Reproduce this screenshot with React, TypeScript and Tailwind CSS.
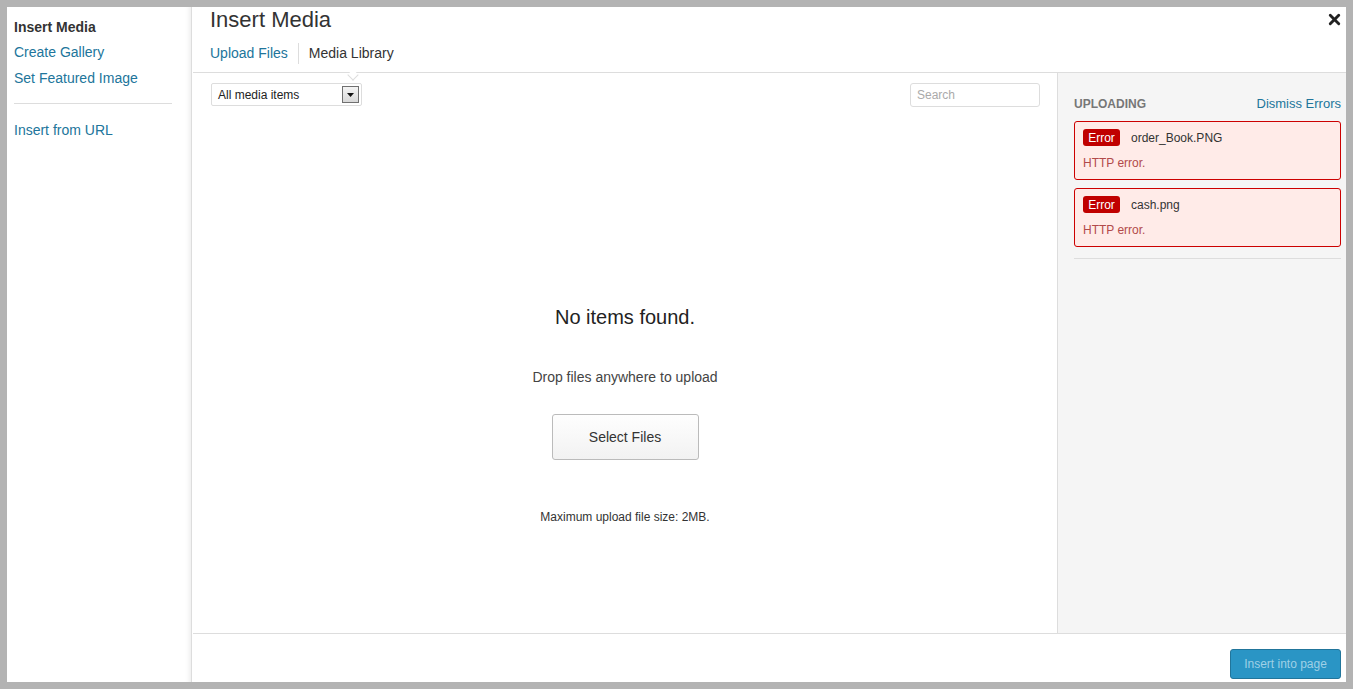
import { X } from "lucide-react";

const font = { fontFamily: '"Liberation Sans", Arial, sans-serif' };

function MenuLink({ children, className = "" }: { children: React.ReactNode; className?: string }) {
  return <a className={`block text-[14px] leading-[18px] text-[#21759b] ${className}`}>{children}</a>;
}

function ErrorCard({ name }: { name: string }) {
  return (
    <div className="h-[59px] w-[267px] rounded-[3px] border border-[#cc0000] bg-[#ffebe8] pl-[8px] pt-[7px]">
      <div className="flex items-center">
        <span className="flex h-[17px] w-[37px] items-center justify-center rounded-[3px] bg-[#c00000] text-[12px] text-white">
          Error
        </span>
        <span className="ml-[11px] text-[12px] text-[#333]">{name}</span>
      </div>
      <div className="mt-[9px] text-[12px] leading-[14px] text-[#b24a4a]">HTTP error.</div>
    </div>
  );
}

export default function App() {
  return (
    <div style={font} className="h-[689px] w-full bg-[#b3b3b3] p-[7px]">
      <div className="flex h-full bg-white">
        {/* left menu */}
        <div className="w-[185px] shrink-0 border-r border-[#dddddd] pl-[7px] pt-[11px] shadow-[inset_-6px_0_6px_-6px_rgba(0,0,0,0.12)]">
          <div className="text-[14px] font-bold leading-[18px] text-[#333]">Insert Media</div>
          <MenuLink className="mt-[7px]">Create Gallery</MenuLink>
          <MenuLink className="mt-[8px]">Set Featured Image</MenuLink>
          <div className="mt-[16px] mr-[19px] h-px bg-[#dddddd]" />
          <MenuLink className="mt-[17px]">Insert from URL</MenuLink>
        </div>

        {/* main frame */}
        <div className="ml-px flex min-w-0 flex-1 flex-col">
          <div className="relative h-[66px] shrink-0 border-b border-[#dddddd] pl-[17px]">
            <div className="pt-[1px] text-[22px] leading-[24px] text-[#333]">Insert Media</div>
            <button className="absolute right-[3px] top-[4px] text-[#222]">
              <X className="h-[17px] w-[17px]" strokeWidth={4} />
            </button>
            <div className="mt-[11px] flex items-center text-[14px]">
              <span className="pr-[10px] text-[#21759b]">Upload Files</span>
              <span className="h-[21px] w-px bg-[#dddddd]" />
              <span className="pl-[10px] text-[#333]">Media Library</span>
            </div>
            <div className="absolute left-[156px] top-[64px] h-[8px] w-[8px] rotate-45 border-b border-r border-[#dddddd] bg-white" />
          </div>

          <div className="flex min-h-0 flex-1">
            {/* browser */}
            <div className="flex w-[864px] shrink-0 flex-col">
              <div className="flex items-start justify-between pl-[18px] pr-[17px] pt-[10px]">
                <div className="flex h-[23px] w-[151px] items-center justify-between rounded-[2px] border border-[#dddddd] pl-[6px] pr-[2px] text-[12px] text-[#222]">
                  <span>All media items</span>
                  <span className="flex h-[17px] w-[17px] items-center justify-center border border-[#707070] bg-gradient-to-b from-[#f4f4f4] to-[#d8d8d8]">
                    <svg width="7" height="4" viewBox="0 0 7 4">
                      <path d="M0 0h7L3.5 4z" fill="#111" />
                    </svg>
                  </span>
                </div>
                <div className="flex h-[24px] w-[130px] items-center rounded-[3px] border border-[#dddddd] pl-[6px] text-[12px] text-[#aaaaaa]">
                  Search
                </div>
              </div>
              <div className="flex flex-col items-center">
                <div className="mt-[198px] text-[20px] leading-[24px] text-[#222]">No items found.</div>
                <div className="mt-[39px] text-[14px] leading-[18px] text-[#444]">Drop files anywhere to upload</div>
                <button className="mt-[28px] h-[46px] w-[147px] rounded-[3px] border border-[#bbbbbb] bg-gradient-to-b from-[#fefefe] to-[#f2f2f2] text-[14px] text-[#333]">
                  Select Files
                </button>
                <div className="mt-[50px] text-[12px] leading-[14px] text-[#333]">Maximum upload file size: 2MB.</div>
              </div>
            </div>

            {/* uploading sidebar */}
            <div className="flex-1 border-l border-[#dddddd] bg-[#f5f5f5] pl-[16px] pt-[21px]">
              <div className="flex items-center justify-between pr-[5px]">
                <span className="text-[12px] font-bold text-[#777]">UPLOADING</span>
                <span className="text-[13px] text-[#21759b]">Dismiss Errors</span>
              </div>
              <div className="mt-[7px] flex flex-col gap-[8px]">
                <ErrorCard name="order_Book.PNG" />
                <ErrorCard name="cash.png" />
              </div>
              <div className="mt-[11px] mr-[5px] h-px bg-[#dddddd]" />
            </div>
          </div>

          {/* footer */}
          <div className="flex h-[49px] shrink-0 items-end justify-end border-t border-[#dddddd] pb-[3px] pr-[5px]">
            <button className="h-[30px] w-[111px] rounded-[3px] border border-[#21759b] bg-[#2a95c5] text-[12px] text-[#9fd0e6]">
              Insert into page
            </button>
          </div>
        </div>
      </div>
    </div>
  );
}
